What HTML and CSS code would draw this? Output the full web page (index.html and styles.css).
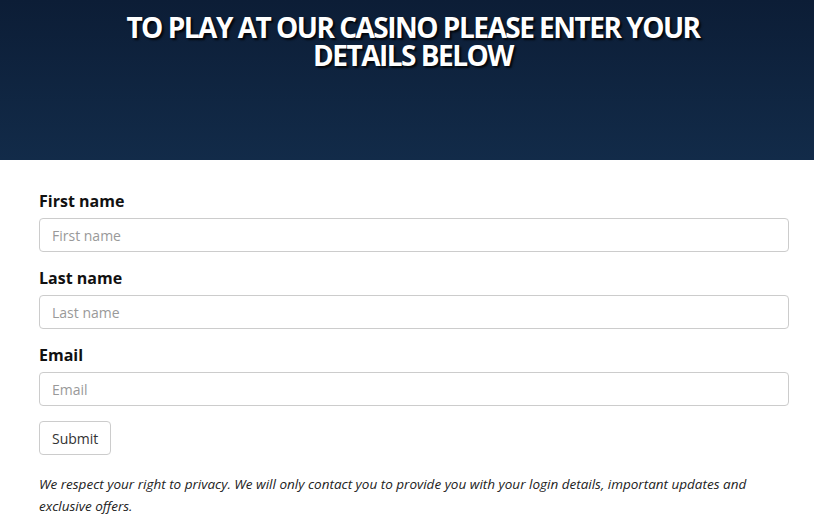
FILE: index.html
```html
<!DOCTYPE html>
<html lang="en">
<head>
  <meta charset="UTF-8">
  <meta name="viewport" content="width=device-width, initial-scale=1.0">
  <title>Casino sign up</title>
  <link rel="stylesheet" href="styles.css">
</head>
<body>
  <div class="hero">
    <h1 class="hero-title">TO PLAY AT OUR CASINO PLEASE ENTER YOUR DETAILS BELOW</h1>
  </div>

  <div class="form-wrap">
    <form class="signup-form">
      <div class="form-group">
        <label for="first">First name</label>
        <input id="first" type="text" placeholder="First name">
      </div>
      <div class="form-group">
        <label for="last">Last name</label>
        <input id="last" type="text" placeholder="Last name">
      </div>
      <div class="form-group">
        <label for="email">Email</label>
        <input id="email" type="email" placeholder="Email">
      </div>
      <button type="button" class="btn">Submit</button>
    </form>
    <p class="privacy">We respect your right to privacy. We will only contact you to provide you with your login details, important updates and exclusive offers.</p>
  </div>
</body>
</html>
```

FILE: styles.css
```css
* {
  margin: 0;
  padding: 0;
  box-sizing: border-box;
  font-family: 'Open Sans', 'Liberation Sans', sans-serif;
}

body {
  background-color: #fff;
  color: #333;
}

.hero {
  height: 160px;
  background: linear-gradient(to bottom, #0c1d36, #122b49);
  padding: 13px 14px 0 26px;
}

.hero-title {
  max-width: 600px;
  margin: 0 auto;
  text-align: center;
  color: #fff;
  font-size: 28px;
  line-height: 28px;
  font-weight: 700;
  letter-spacing: -1.5px;
  text-shadow: 2px 2px 2px rgba(0, 0, 0, 0.8);
}

.form-wrap {
  padding: 29px 25px 0 39px;
}

.form-group {
  display: flex;
  flex-direction: column;
  margin-bottom: 14px;
}

.form-group label {
  font-size: 16px;
  line-height: 24px;
  font-weight: 700;
  color: #111;
  margin-bottom: 5px;
}

.form-group input {
  height: 34px;
  padding: 6px 12px;
  border: 1px solid #ccc;
  border-radius: 4px;
  font-size: 14px;
  color: #555;
  outline: none;
}

.form-group input::placeholder {
  color: #999;
}

.btn {
  margin-top: 1px;
  height: 34px;
  padding: 6px 12px;
  background-color: #fff;
  border: 1px solid #ccc;
  border-radius: 4px;
  font-size: 14px;
  color: #333;
  cursor: pointer;
}

.privacy {
  margin-top: 18px;
  font-size: 13.5px;
  line-height: 22px;
  font-style: italic;
  color: #222;
}
```
